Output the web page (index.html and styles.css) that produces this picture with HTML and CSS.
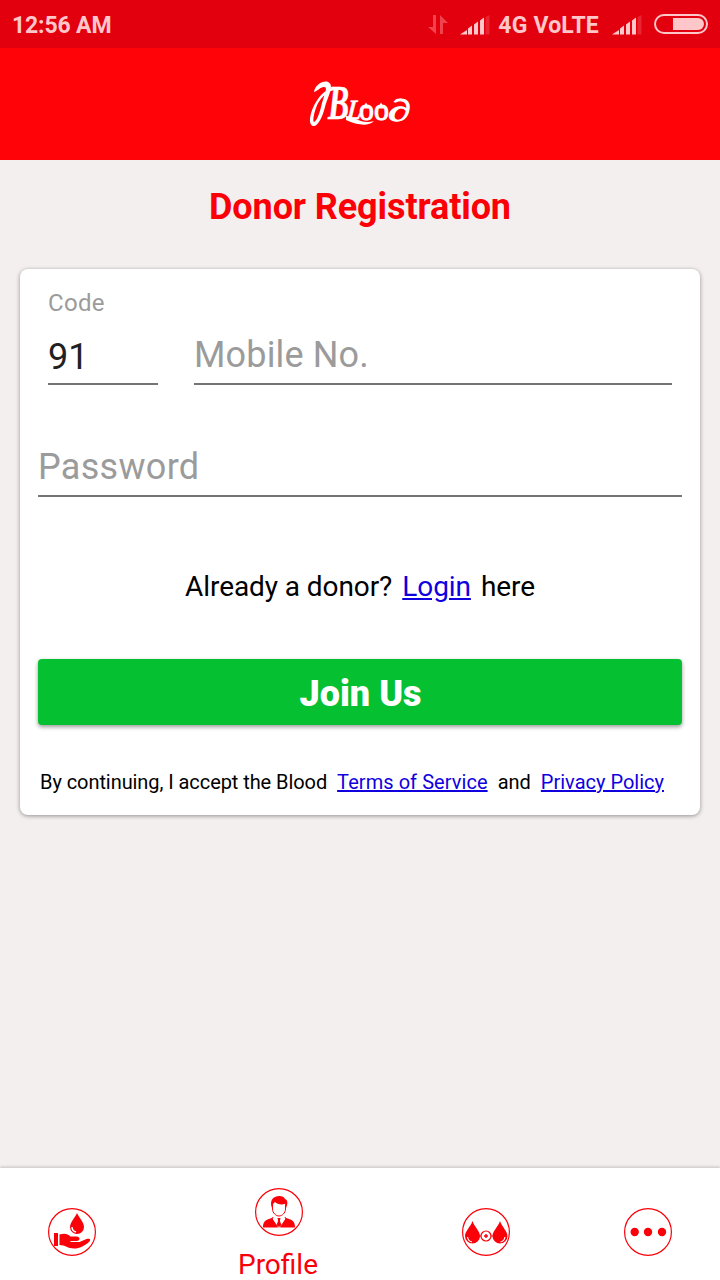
FILE: index.html
```html
<!DOCTYPE html>
<html lang="en">
<head>
<meta charset="utf-8">
<title>Donor Registration</title>
<link rel="stylesheet" href="styles.css">
</head>
<body>
<div class="app">
  <div class="status">
    <span class="clock">12:56 AM</span>
    <div class="indicators">
      <svg class="arrows" width="20" height="20" viewBox="0 0 20 20" fill="currentColor"><path d="M5 0h3v19L0 12h5zM12 19h3V8h5L12 0z"/></svg>
      <svg class="signal" width="30" height="20" viewBox="0 0 30 20" fill="currentColor"><path d="M0 19.500l7-4.500v4.500zM8 13.500l4-3v9H8zM14 9.500l4-3v13h-4zM20 5.500l4-3v17h-4z"/><path opacity=".18" d="M25.500 2l4-2v19.500h-4z"/></svg>
      <span class="network">4G VoLTE</span>
      <svg class="signal" width="30" height="20" viewBox="0 0 30 20" fill="currentColor"><path d="M0 19.500l7-4.500v4.500zM8 13.500l4-3v9H8zM14 9.500l4-3v13h-4zM20 5.500l4-3v17h-4z"/><path opacity=".18" d="M25.500 2l4-2v19.500h-4z"/></svg>
      <svg class="battery" width="54" height="20" viewBox="0 0 54 20"><rect x="1" y="1" width="52" height="18" rx="9" fill="none" stroke="currentColor" stroke-width="2"/><path fill="currentColor" d="M19 4h25a6 6 0 010 12H19z"/></svg>
    </div>
  </div>
  <header class="topbar">
    <svg class="logo" width="104" height="70" viewBox="0 -10 104 70" role="img" aria-label="Blood">
      <g class="letters">
        <text class="letter-b" transform="translate(20 41) scale(.66 1)">B</text>
        <text class="letter-l" transform="translate(38 41) skewX(-14) scale(.75 1)">L</text>
        <text class="letter-o" transform="translate(51 42) scale(.96 1)">o</text>
        <text class="letter-o" transform="translate(66 42) scale(.96 1)">o</text>
        <text class="letter-d" transform="translate(80 43) scale(1.500 1)">∂</text>
      </g>
      <g fill="currentColor">
        <path d="M6 14C7 7 15 2 20 4C27 7 20 18 17 29C14 41 9 49 5 48C-1 46 3 32 8 24C12 17 18 11 26 10L26 12C18 14 11 21 8 30C5 38 5 44 6 44C9 43 12 34 14 25C17 15 20 9 16 9C12 9 10 13 6 14z"/>
        <path d="M38 38C47 38 52 47 66 43C60 49 49 47 38 42z"/>
        <path d="M58 24.500l3.500 6h-7zM73 24.500l3.500 6h-7z"/>
      </g>
    </svg>
  </header>
  <main class="content">
    <h1 class="title">Donor Registration</h1>
    <section class="card">
      <div class="phone">
        <div class="field code"><span class="label">Code</span><span class="value">91</span></div>
        <div class="field mobile"><span class="hint">Mobile No.</span></div>
      </div>
      <div class="field password"><span class="hint">Password</span></div>
      <p class="login"><span>Already a donor?</span><a href="#">Login</a><span>here</span></p>
      <button class="join">Join Us</button>
      <p class="terms"><span class="accept">By continuing, I accept the Blood</span><a class="service" href="#">Terms of Service</a><span>and</span><a href="#">Privacy Policy</a></p>
    </section>
  </main>
  <nav class="tabs">
    <a class="tab tab-donate">
      <svg width="48" height="48" viewBox="0 0 48 48"><circle class="ring" cx="24" cy="24" r="23.400"/><path d="M29 5c-2 5-7 9-7 14a7 7 0 0014 0c0-5-5-9-7-14z"/><path d="M6 25h4v13H6zM11.500 26.500c5-1.500 8-1 11 2h6c4 0 4 4.500 0 4.500h-6v1h9l7-3c4-1 4.500 1 2.500 3-5 4-9 6.500-15 6.500-6 0-9-3.500-14.500-3.500z"/><path class="gleam" d="M24 19c0 3 2 4.500 4 5"/></svg>
    </a>
    <a class="tab tab-profile">
      <svg width="48" height="48" viewBox="0 0 48 48"><circle class="ring" cx="24" cy="24" r="23.400"/><path class="outline" d="M17.500 17v4c0 4 3.500 7 6.500 7s6.500-3 6.500-7v-4"/><path d="M17 20c-2-5-1-9 3-11 4-2 9-1 10 2 3 1 3 5 1 9l-1-4c-4 1-8 0-10-2-2 1-2 3-3 6zM8 39.500c0-6 2-7.500 9-9.500l5.500 9.500zM40 39.500c0-6-2-7.500-9-9.500l-5.500 9.500zM22.500 30h3l-.6 3 1.600 4-2.500 2-2.500-2 1.600-4z"/><path class="outline" d="M18 29l-1 2 6 8.500M30 29l1 2-6 8.500"/></svg>
      <span class="tab-label">Profile</span>
    </a>
    <a class="tab tab-match">
      <svg width="48" height="48" viewBox="0 0 48 48"><circle class="ring" cx="24" cy="24" r="23.400"/><path d="M10.500 13c-2 6-7.500 10-7.500 15a7.500 7.500 0 0015 0c0-5-5.500-9-7.500-15zM38 13c-2 6-7.500 10-7.500 15a7.500 7.500 0 0015 0c0-5-5.500-9-7.500-15z"/><circle class="ring" cx="24" cy="28" r="5"/><path d="M23.300 26h1.400v1.300H26v1.400h-1.300V30h-1.400v-1.300H22v-1.400h1.300z"/><path class="outline" d="M17 28h2M29 28h2"/><path class="gleam thin" d="M5.500 29c.5 3 2 4.500 4.500 5M43 29c-.5 3-2 4.500-4.500 5"/></svg>
    </a>
    <a class="tab tab-more">
      <svg width="48" height="48" viewBox="0 0 48 48"><circle class="ring" cx="24" cy="24" r="23.400"/><circle cx="10.700" cy="24" r="4.200"/><circle cx="24" cy="24" r="4.200"/><circle cx="38" cy="24" r="4.200"/></svg>
    </a>
  </nav>
</div>
</body>
</html>
```
FILE: styles.css
```css
* { box-sizing: border-box; }
body { margin: 0; font-family: Roboto, sans-serif; color: #000; }
.app { display: flex; flex-direction: column; width: 720px; height: 1280px; background: #f3efee; overflow: hidden; }
.status { display: flex; justify-content: space-between; align-items: center; height: 48px; padding: 3px 12px 0; background: #e2000f; color: #ffc7ca; font-size: 23px; font-weight: 700; line-height: 28px; }
.clock { letter-spacing: -.15px; }
.indicators { display: flex; align-items: center; }
.indicators svg { display: block; }
.arrows { color: #f0434e; margin: -1px 12px 0 0; }
.signal { margin-top: -1px; }
.network { margin: 0 13px 0 8px; letter-spacing: .2px; }
.battery { margin: -4px 0 0 12px; }
.topbar { display: flex; justify-content: center; height: 112px; padding-top: 20px; background: #ff0308; color: #fff; }
.logo { overflow: visible; }
.letters { fill: currentColor; stroke: currentColor; stroke-width: .5; font-family: "Liberation Serif", serif; font-weight: 700; }
.letter-b { font-size: 48px; font-style: italic; }
.letter-l { font-size: 28px; }
.letter-o { font-size: 31px; font-weight: 400; stroke-width: 1; }
.letter-d { font-size: 31px; stroke-width: .9; }
.content { flex: 1; padding: 0 20px; }
.title { margin: 24px 0 39px; color: #fb0006; font-size: 36px; font-weight: 700; line-height: 46px; letter-spacing: -.1px; text-align: center; }
.card { height: 546px; padding: 0 18px; border-radius: 8px; background: #fff; box-shadow: 0 1px 4px rgba(0, 0, 0, .4); }
.phone { display: flex; gap: 36px; height: 116px; padding: 0 10px; }
.field { display: flex; flex-direction: column; justify-content: flex-end; border-bottom: 2px solid #747474; font-size: 36px; line-height: 44px; }
.code { width: 110px; padding-bottom: 4px; }
.label { margin-bottom: 18px; color: #9b9b9b; font-size: 24px; line-height: 28px; letter-spacing: .3px; }
.value { color: #212121; }
.mobile { flex: 1; padding-bottom: 6px; }
.hint { color: #9b9b9b; letter-spacing: .15px; }
.password { height: 112px; padding-bottom: 6px; }
.password .hint { letter-spacing: .3px; }
.login { display: flex; justify-content: center; gap: 10px; margin: 72px 0 54px; font-size: 28px; line-height: 36px; letter-spacing: -.08px; }
.login a, .terms a { color: #1000e0; text-decoration: underline; }
.join { display: block; width: 100%; height: 66px; padding: 3px 0 0 1px; border: 0; border-radius: 4px; background: #05c030; box-shadow: 0 2px 4px rgba(0, 0, 0, .4); color: #fff; font: 900 36px/44px Roboto, sans-serif; }
.terms { display: flex; gap: 10px; margin: 43px 0 0 2px; font-size: 20px; line-height: 28px; white-space: nowrap; }
.accept { letter-spacing: -.07px; }
.service { letter-spacing: .06px; }
.tabs { display: flex; align-items: center; height: 112px; padding: 16px 0 0 48px; background: #fff; box-shadow: 0 -1px 3px rgba(0, 0, 0, .2); color: #fa0009; }
.tab { display: flex; flex-direction: column; align-items: center; width: 48px; }
.tab svg { display: block; fill: currentColor; }
.ring { fill: none; stroke: currentColor; stroke-width: 1.200; }
.tab .outline { fill: none; stroke: currentColor; stroke-width: 1; }
.gleam { fill: none; stroke: #fff; stroke-width: 1.500; }
.thin { stroke-width: 1.200; }
.tab-profile { width: 90px; margin: 0 138px; align-self: flex-start; padding-top: 4px; }
.tab-label { margin: 12px 2px 0 0; font-size: 28px; line-height: 34px; }
.tab-more { margin-left: 114px; }
```
